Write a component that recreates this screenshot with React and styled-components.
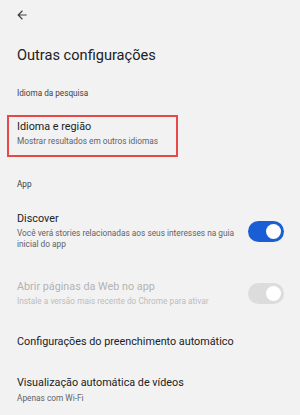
import React from 'react';
import styled, { createGlobalStyle } from 'styled-components';

const Global = createGlobalStyle`
  body {
    margin: 0;
    background: #f2f2f2;
    font-family: Roboto, "Noto Sans", sans-serif;
    color: #202124;
  }
`

const Page = styled.div`
  width: 300px;
  height: 415px;
  overflow: hidden;
  background: #f2f2f2;
`

const TopBar = styled.div`
  height: 30px;
  display: flex;
  align-items: center;
  padding-left: 15px;
`

const Title = styled.h1`
  margin: 0;
  padding: 14px 17px 0;
  font-size: 14.6px;
  font-weight: 400;
  line-height: 22px;
`

const Section = styled.div`
  padding: 21px 17px 16px;
  font-size: 8.2px;
  line-height: 12px;
  color: #3c4043;
`

const Item = styled.div`
  display: flex;
  align-items: center;
  justify-content: space-between;
  padding: ${p => p.pad || '0 16px 0 17px'};
  padding-left: 17px;
`

const Marked = styled.div`
  margin: 0 122px 0 7px;
  padding: 3px 0 8px 8px;
  border: 2px solid #e94848;
`

const Texts = styled.div`
  display: flex;
  flex-direction: column;
  gap: ${p => p.gap || '2px'};
  max-width: 222px;
`

const Label = styled.div`
  font-size: 10.8px;
  line-height: 14px;
  color: ${p => p.disabled ? '#b3b3b3' : '#202124'};
`

const Sub = styled.div`
  font-size: 8.3px;
  line-height: 11px;
  color: ${p => p.disabled ? '#bdbdbd' : '#5f6368'};
`

const Track = styled.div`
  width: 36px;
  height: 21px;
  border-radius: 11px;
  background: ${p => p.on ? '#1a5ed6' : '#dcdcdc'};
  display: flex;
  align-items: center;
  justify-content: flex-end;
  padding: 0 3px;
  box-sizing: border-box;
  flex-shrink: 0;
`

const Knob = styled.div`
  width: 15px;
  height: 15px;
  border-radius: 50%;
  background: #fff;
`

function Switch({ on }) {
  return (
    <Track on={on}>
      <Knob />
    </Track>
  );
}

export default function App() {
  return (
    <Page>
      <Global />
      <TopBar>
        <svg width="14" height="14" viewBox="0 0 24 24">
          <path d="M20 11H7.83l5.59-5.59L12 4l-8 8 8 8 1.41-1.41L7.83 13H20v-2z" fill="#3c4043" />
        </svg>
      </TopBar>
      <Title>Outras configurações</Title>
      <Section>Idioma da pesquisa</Section>
      <Marked>
        <Texts>
          <Label>Idioma e região</Label>
          <Sub>Mostrar resultados em outros idiomas</Sub>
        </Texts>
      </Marked>
      <Section>App</Section>
      <Item pad="6px 16px 0 17px">
        <Texts>
          <Label>Discover</Label>
          <Sub>Você verá stories relacionadas aos seus interesses na guia inicial do app</Sub>
        </Texts>
        <Switch on />
      </Item>
      <Item pad="30px 16px 0 17px">
        <Texts>
          <Label disabled>Abrir páginas da Web no app</Label>
          <Sub disabled>Instale a versão mais recente do Chrome para ativar</Sub>
        </Texts>
        <Switch />
      </Item>
      <Item pad="28px 16px 0 17px">
        <Texts>
          <Label>Configurações do preenchimento automático</Label>
        </Texts>
      </Item>
      <Item pad="27px 16px 0 17px">
        <Texts gap="3px">
          <Label>Visualização automática de vídeos</Label>
          <Sub>Apenas com Wi-Fi</Sub>
        </Texts>
      </Item>
    </Page>
  );
}
